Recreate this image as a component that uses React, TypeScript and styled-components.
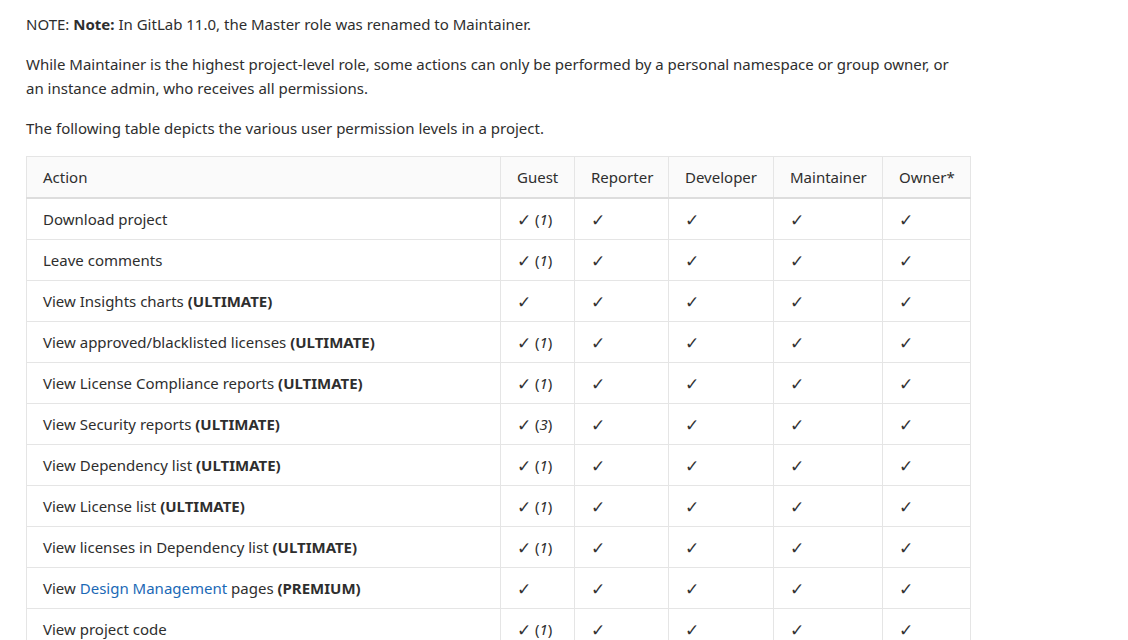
import React from "react";
import styled, { createGlobalStyle } from "styled-components";

const Global = createGlobalStyle`
  html, body { margin: 0; padding: 0; background: #ffffff; }
  body {
    font-family: "Noto Sans", "Open Sans", "DejaVu Sans", sans-serif;
    font-size: 15px;
    line-height: 24px;
    color: #2e2e2e;
  }
`;

const Page = styled.div`
  padding: 12px 26px;
`;

const Para = styled.p`
  margin: 0 0 16px 0;
  max-width: 940px;
`;

const Table = styled.table`
  border-collapse: collapse;
  border-spacing: 0;
  table-layout: fixed;
  width: 944px;
  border: 1px solid #e5e5e5;
`;

const HeadCell = styled.th<{ $w: number }>`
  box-sizing: border-box;
  width: ${(p) => p.$w}px;
  text-align: left;
  font-weight: 400;
  background: #fafafa;
  padding: 8px 16px;
  border: 1px solid #e5e5e5;
  border-bottom: 2px solid #dddddd;
  white-space: nowrap;
`;

const Cell = styled.td`
  padding: 8px 16px;
  border: 1px solid #e5e5e5;
  white-space: nowrap;
  height: 24px;
  line-height: 24px;
`;

const Check = styled.span`
  display: inline-block;
  vertical-align: top;
  box-sizing: border-box;
  height: 24px;
  padding-top: 2px;
  line-height: 22px;
  font-family: "DejaVu Sans ExtraLight", "DejaVu Sans", sans-serif;
  font-weight: 200;
  font-size: 17px;
  color: #333333;
`;

const Note = styled.em`
  font-style: italic;
`;

const Link = styled.a`
  color: #1b69b6;
  text-decoration: none;
`;

type Row = { action: React.ReactNode; guest: string | null };

const rows: Row[] = [
  { action: "Download project", guest: "1" },
  { action: "Leave comments", guest: "1" },
  { action: <>View Insights charts <strong>(ULTIMATE)</strong></>, guest: null },
  { action: <>View approved/blacklisted licenses <strong>(ULTIMATE)</strong></>, guest: "1" },
  { action: <>View License Compliance reports <strong>(ULTIMATE)</strong></>, guest: "1" },
  { action: <>View Security reports <strong>(ULTIMATE)</strong></>, guest: "3" },
  { action: <>View Dependency list <strong>(ULTIMATE)</strong></>, guest: "1" },
  { action: <>View License list <strong>(ULTIMATE)</strong></>, guest: "1" },
  { action: <>View licenses in Dependency list <strong>(ULTIMATE)</strong></>, guest: "1" },
  {
    action: (
      <>
        View <Link href="#">Design Management</Link> pages <strong>(PREMIUM)</strong>
      </>
    ),
    guest: null,
  },
  { action: "View project code", guest: "1" },
];

const cols: [string, number][] = [
  ["Action", 474],
  ["Guest", 74],
  ["Reporter", 94],
  ["Developer", 105],
  ["Maintainer", 109],
  ["Owner*", 88],
];

export default function App() {
  return (
    <Page>
      <Global />
      <Para>
        NOTE: <strong>Note:</strong> In GitLab 11.0, the Master role was renamed to Maintainer.
      </Para>
      <Para>
        While Maintainer is the highest project-level role, some actions can only be performed by a
        personal namespace or group owner, or an instance admin, who receives all permissions.
      </Para>
      <Para>The following table depicts the various user permission levels in a project.</Para>
      <Table>
        <thead>
          <tr>
            {cols.map(([c, w]) => (
              <HeadCell key={c} $w={w}>
                {c}
              </HeadCell>
            ))}
          </tr>
        </thead>
        <tbody>
          {rows.map((r, i) => (
            <tr key={i}>
              <Cell>{r.action}</Cell>
              <Cell>
                <Check>✓</Check>
                {r.guest && (
                  <>
                    {" "}(<Note>{r.guest}</Note>)
                  </>
                )}
              </Cell>
              <Cell>
                <Check>✓</Check>
              </Cell>
              <Cell>
                <Check>✓</Check>
              </Cell>
              <Cell>
                <Check>✓</Check>
              </Cell>
              <Cell>
                <Check>✓</Check>
              </Cell>
            </tr>
          ))}
        </tbody>
      </Table>
    </Page>
  );
}
